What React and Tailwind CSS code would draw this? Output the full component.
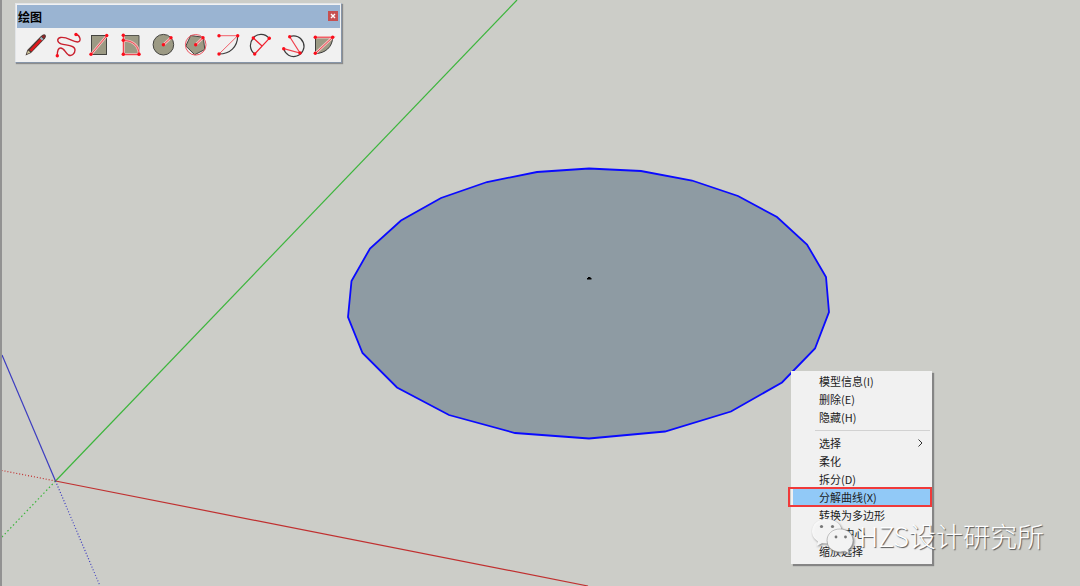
import React from 'react';

const Dot = ({ x, y }) => <circle cx={x} cy={y} r="1.7" fill="#fb0d1b" />;

const tools = [
  {
    name: '线条',
    icon: (
      <>
        <path d="M6.5 27.5 L8.3 22 L22 8 Q25 5 26.6 7 Q27.6 8.600 26 10.500 L12 25 Z" fill="#4a3c38" />
        <path d="M10.500 22 L21 10.800 L23 12.500 L12.600 23.500 Z" fill="#e0181c" />
        <path d="M20.800 10.500 L22.300 9 L24.500 11 L23 12.500 Z" fill="#9fb3c2" />
        <path d="M22.800 8.500 Q24.800 6.500 25.800 7.700 Q26.400 9 24.800 10.500 Z" fill="#9c2428" />
        <path d="M7.800 26 L9 22.600 L11.500 24.500 Z" fill="#cfc79a" />
      </>
    ),
  },
  {
    name: '手绘线',
    icon: (
      <>
        <path
          d="M25 6.500 C29 7 31 14 26.500 14 C21 13.500 16 8.500 9.500 9.500 C5.500 10.500 6 14.500 10 15.800 C15 17.500 24 17 24 22 C24 26 20.500 28.500 17.500 27 C14 25 13.500 20 9.500 20 C6.500 20 6.300 24 6.300 27.500"
          fill="none" stroke="#c9202e" strokeWidth="1.4"
        />
        <Dot x={25} y={6.5} />
        <Dot x={6.3} y={27.7} />
      </>
    ),
  },
  {
    name: '矩形',
    icon: (
      <>
        <rect x="8.500" y="7.500" width="15" height="19" fill="#9c9a84" stroke="#444440" />
        <path d="M8 26.500 L24 7.500" stroke="#f6c4c0" strokeWidth="2.6" />
        <path d="M8 26.500 L24 7.500" stroke="#f04452" />
        <Dot x={8} y={26.3} />
        <Dot x={23.7} y={7.5} />
      </>
    ),
  },
  {
    name: '旋转矩形',
    icon: (
      <>
        <path d="M8.500 7.500 H24 V26.500 H8.500 Z" fill="#9c9a84" stroke="#55554f" />
        <path d="M8.500 7 V26.500 H24 C24 18 18 12.500 8.500 12.500" fill="none" stroke="#f3bcb8" strokeWidth="2.6" />
        <path d="M8.500 7 V26.500 H24 C24 18 18 12.500 8.500 12.500" fill="none" stroke="#f04452" />
        <Dot x={8.3} y={7.3} />
        <Dot x={8.3} y={12.3} />
        <Dot x={8.3} y={26.3} />
        <Dot x={24} y={26.3} />
      </>
    ),
  },
  {
    name: '圆',
    icon: (
      <>
        <circle cx="16.400" cy="16.700" r="10.300" fill="#9c9a84" stroke="#444440" />
        <path d="M16.400 16.700 L24 9.700" stroke="#f6c4c0" strokeWidth="2.600" />
        <path d="M16.400 16.700 L24 9.700" stroke="#f04452" />
        <Dot x={16.4} y={16.7} />
        <Dot x={24} y={9.7} />
      </>
    ),
  },
  {
    name: '多边形',
    icon: (
      <>
        <path d="M11.700 7.500 L24.300 9.300 L25.800 21.500 L15.700 26.700 L6.800 18 Z" fill="#9c9a84" stroke="#444440" />
        <circle cx="16.700" cy="16.800" r="10.300" fill="none" stroke="#ee5560" />
        <path d="M16.700 16.700 L24 9.700" stroke="#f6c4c0" strokeWidth="2.600" />
        <path d="M16.700 16.700 L24 9.700" stroke="#f04452" />
        <Dot x={16.7} y={16.7} />
        <Dot x={24} y={9.7} />
      </>
    ),
  },
  {
    name: '圆弧',
    icon: (
      <>
        <path d="M26.700 7.700 C26.500 19 19 26 8 26" fill="none" stroke="#3c3c3c" strokeWidth="1.200" />
        <path d="M8 7.700 H26.700 L8 26" fill="none" stroke="#f0606a" />
        <Dot x={8} y={7.7} />
        <Dot x={26.7} y={7.7} />
        <Dot x={8} y={26} />
      </>
    ),
  },
  {
    name: '两点圆弧',
    icon: (
      <>
        <path d="M26.300 10.300 C22 5 14 5 10.300 10 C6 15 6.500 22 11.700 26" fill="none" stroke="#3c3c3c" strokeWidth="1.200" />
        <path d="M10.300 10 L19 18 M26.300 10.300 L11.700 26" stroke="#f0202e" strokeWidth="1.200" />
        <Dot x={10.3} y={10} />
        <Dot x={26.3} y={10.3} />
        <Dot x={11.7} y={26} />
      </>
    ),
  },
  {
    name: '三点圆弧',
    icon: (
      <>
        <path d="M14.700 8.700 A10.300 10.300 0 1 1 8.700 20.700" fill="none" stroke="#3c3c3c" strokeWidth="1.200" />
        <path d="M14.700 8.700 L25 25 L8.700 20.700" fill="none" stroke="#f0404c" strokeWidth="1.200" />
        <Dot x={14.7} y={8.7} />
        <Dot x={25} y={25} />
        <Dot x={8.7} y={20.7} />
      </>
    ),
  },
  {
    name: '扇形',
    icon: (
      <>
        <path d="M8.500 9.300 H25.700 C25.500 19 18 25.500 8.500 25.500 Z" fill="#9c9a84" stroke="#3c3c3c" />
        <path d="M8.500 9.300 H25.700 L8.500 25.300" fill="none" stroke="#f6c4c0" strokeWidth="2.600" />
        <path d="M8.500 9.300 H25.700 L8.500 25.300" fill="none" stroke="#f04452" />
        <Dot x={8.3} y={9.3} />
        <Dot x={25.7} y={9.3} />
        <Dot x={8.3} y={25.3} />
      </>
    ),
  },
];

const menuGroups = [
  [{ label: '模型信息(I)' }, { label: '删除(E)' }, { label: '隐藏(H)' }],
  [
    { label: '选择', submenu: true },
    { label: '柔化' },
    { label: '拆分(D)' },
    { label: '分解曲线(X)', active: true },
    { label: '转换为多边形' },
    { label: '查找 中心' },
    { label: '缩放选择' },
  ],
];

const Scene = () => (
  <svg className="absolute inset-0 w-full h-full" viewBox="0 0 1080 586" preserveAspectRatio="xMinYMin slice">
    {/* Axes */}
    <g strokeWidth="1.200" fill="none">
      <path d="M55.500 481 L517 0" stroke="#3cb53c" />
      <path d="M55.500 481 L588 586" stroke="#c03030" />
      <path d="M55.500 481 L2 355" stroke="#3c3cc0" />
      <path d="M55.500 481 L2 470.500" stroke="#c03030" strokeDasharray="1 2" />
      <path d="M55.500 481 L2 537" stroke="#3cb53c" strokeDasharray="1.500 2.500" />
      <path d="M55.500 481 L100 586" stroke="#3c3cc0" strokeDasharray="1 2" />
    </g>
    {/* Selected circle face */}
    <polygon
      points="589,168.500 641,171 692,180.500 738,196 777,217 807,244.500 826,277 829,312 815,348.500 782,382.500 731,411.500 665,431.500 589,438.500 515,433 449,415 397,387.500 362.500,353 348,317 351.500,281 370,248.500 401,220.500 441,198 487,182 537,172"
      fill="#8e9ba3" stroke="#0a0aff" strokeWidth="1.800"
    />
    <path d="M587 279.500 V278 H588 V277 H590.500 V278 H591.500 V279.500 Z" fill="#000" />
  </svg>
);

const DrawToolbar = () => (
  <section className="absolute left-[15px] top-[3px] border border-[#e2e5e8] border-r-[#8695a8] border-b-[#8695a8] bg-[#f1f1f1] shadow-[1px_1px_1px_#8c8c8c]">
    <header className="m-px mb-0 flex h-[23px] items-center justify-between bg-[#9ab4d2] pl-px pr-[2px]">
      <h1 className="text-xs font-bold text-black">绘图</h1>
      <button aria-label="关闭" className="mb-[2px] flex h-[10px] w-[10px] items-center justify-center bg-[#c75050]">
        <svg viewBox="0 0 10 10" className="h-[10px] w-[10px]">
          <path d="M3 3 L7 7 M7 3 L3 7" stroke="#fff" strokeWidth="1.400" />
        </svg>
      </button>
    </header>
    <div className="flex pl-[3px] pr-[2px]">
      {tools.map((tool) => (
        <button key={tool.name} aria-label={tool.name} className="h-[34px] w-8">
          <svg viewBox="0 0 32 34" className="h-[34px] w-8">{tool.icon}</svg>
        </button>
      ))}
    </div>
  </section>
);

const MenuItem = ({ item }) => (
  <button
    className={
      item.active
        ? 'relative flex h-[18px] w-full items-center border-l-2 border-[#f1f1f1] bg-[#91c9f7] pl-[26px] pr-2 text-left'
        : 'relative flex h-[18px] w-full items-center pl-7 pr-2 text-left'
    }
  >
    <span className="flex-1">{item.label}</span>
    {item.submenu && (
      <svg viewBox="0 0 8 8" className="h-2 w-2">
        <path d="M2.500 0.500 L6 4 L2.500 7.500" fill="none" stroke="#333" />
      </svg>
    )}
    {item.active && <span className="absolute -inset-y-px -left-[5px] right-0 border-2 border-[#f03a3a]" />}
  </button>
);

const ContextMenu = () => (
  <nav className="absolute left-[791px] top-[371px] w-[141px] bg-[#f1f1f1] pt-px pb-1 text-[11px] text-[#1c1c1c] shadow-[2px_2px_1px_#858585]">
    {menuGroups.map((group, i) => (
      <div key={i}>
        {i > 0 && <hr className="mt-1 mb-[3px] ml-6 mr-[2px] border-[#d2d2d2]" />}
        {group.map((item) => (
          <MenuItem key={item.label} item={item} />
        ))}
      </div>
    ))}
  </nav>
);

const Watermark = () => (
  <div className="pointer-events-none absolute left-[811px] top-[514px] flex items-center gap-[2px]">
    <svg viewBox="0 0 46 44" className="h-11 w-[46px] drop-shadow-[1px_1px_1px_#777]">
      <path d="M15 5 C7 5 1 10 1 17.500 C1 22 3.500 25 7 27.500 L5.500 32 L11 29.300 L16 29.500 C15.500 21 22 15.500 30.500 16 C29.500 9 23 5 15 5 Z" fill="#fafafa" fillOpacity="0.950" />
      <path d="M29 15 C21.500 15 16 20 16 26.500 C16 33 21.500 38 29 38 L34 37.200 L38 39.500 L37.200 35.700 C40.500 33.500 42 30 42 26.500 C42 20 36.500 15 29 15 Z" fill="#fafafa" fillOpacity="0.950" stroke="#999" strokeWidth="0.600" />
      <g fill="#777">
        <circle cx="10.500" cy="12.500" r="1.600" />
        <circle cx="21.500" cy="12.500" r="1.600" />
        <circle cx="25" cy="23" r="1.400" />
        <circle cx="34.500" cy="23" r="1.400" />
      </g>
    </svg>
    <span className="whitespace-nowrap text-[27px] leading-[36px] font-light text-white [text-shadow:1px_1px_1px_#555]">HZS设计研究所</span>
  </div>
);

export default function App() {
  return (
    <main className="relative min-h-screen overflow-hidden border-l-2 border-[#929292] bg-[#cccdc8] font-['Noto_Sans_CJK_SC',sans-serif]">
      <div className="absolute inset-y-0 -left-[2px] right-0">
        <Scene />
        <DrawToolbar />
        <ContextMenu />
        <Watermark />
      </div>
    </main>
  );
}
